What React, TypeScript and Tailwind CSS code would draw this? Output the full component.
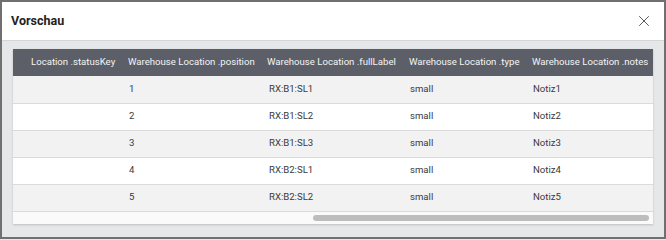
import React from 'react';
import { X } from 'lucide-react';

type Row = {
  statusKey: string;
  position: string;
  fullLabel: string;
  type: string;
  notes: string;
};

const ROWS: Row[] = [
  { statusKey: '', position: '1', fullLabel: 'RX:B1:SL1', type: 'small', notes: 'Notiz1' },
  { statusKey: '', position: '2', fullLabel: 'RX:B1:SL2', type: 'small', notes: 'Notiz2' },
  { statusKey: '', position: '3', fullLabel: 'RX:B1:SL3', type: 'small', notes: 'Notiz3' },
  { statusKey: '', position: '4', fullLabel: 'RX:B2:SL1', type: 'small', notes: 'Notiz4' },
  { statusKey: '', position: '5', fullLabel: 'RX:B2:SL2', type: 'small', notes: 'Notiz5' },
];

function App() {
  return (
    <div className="w-[666px] h-[240px] bg-[#e6e7e9] font-['Roboto',sans-serif]">
      <div className="w-full h-[239px] border-2 border-[#707070] flex flex-col bg-[#e6e7e9]">
        {/* Dialog title bar */}
        <div className="h-[39px] shrink-0 bg-white border-b border-[#d4d5d8] flex items-center justify-between pl-[9px] pr-[11px]">
          <span className="text-[12.5px] font-bold text-[#222]">Vorschau</span>
          <X size={18} strokeWidth={1.3} className="text-[#555]" />
        </div>

        {/* Preview table */}
        <div className="flex-1 pt-[8px] px-[11px]">
          <div className="bg-white shadow-[0_1px_2px_rgba(0,0,0,0.18)] overflow-hidden">
            <table className="table-fixed border-collapse text-[9.6px] w-[640px]">
              <colgroup>
                <col className="w-[109px]" />
                <col className="w-[139px]" />
                <col className="w-[142px]" />
                <col className="w-[123px]" />
                <col className="w-[127px]" />
              </colgroup>
              <thead>
                <tr className="h-[27px] bg-[#5c5f67] text-[#f4f4f5] text-left">
                  <th className="font-normal pl-[18px] whitespace-nowrap">Location .statusKey</th>
                  <th className="font-normal pl-[6px] whitespace-nowrap">Warehouse Location .position</th>
                  <th className="font-normal pl-[6px] whitespace-nowrap">Warehouse Location .fullLabel</th>
                  <th className="font-normal pl-[6px] whitespace-nowrap">Warehouse Location .type</th>
                  <th className="font-normal pl-[6px] whitespace-nowrap">Warehouse Location .notes</th>
                </tr>
              </thead>
              <tbody className="text-[#3a3a3a]">
                {ROWS.map((row, i) => (
                  <tr
                    key={row.position}
                    className={`h-[27px] border-b border-[#dadada] ${i % 2 === 0 ? 'bg-[#f2f2f2]' : 'bg-white'}`}
                  >
                    <td className="pl-[18px]">{row.statusKey}</td>
                    <td className="pl-[7px]">{row.position}</td>
                    <td className="pl-[8px]">{row.fullLabel}</td>
                    <td className="pl-[7px]">{row.type}</td>
                    <td className="pl-[7px]">{row.notes}</td>
                  </tr>
                ))}
              </tbody>
            </table>
            {/* Horizontal scrollbar, scrolled to the far right */}
            <div className="h-[12px] bg-[#fafafa] flex items-center">
              <div className="ml-[300px] w-[336px] h-[6px] rounded-full bg-[#bdbdbd]" />
            </div>
          </div>
        </div>
      </div>
    </div>
  );
}

export default App;
